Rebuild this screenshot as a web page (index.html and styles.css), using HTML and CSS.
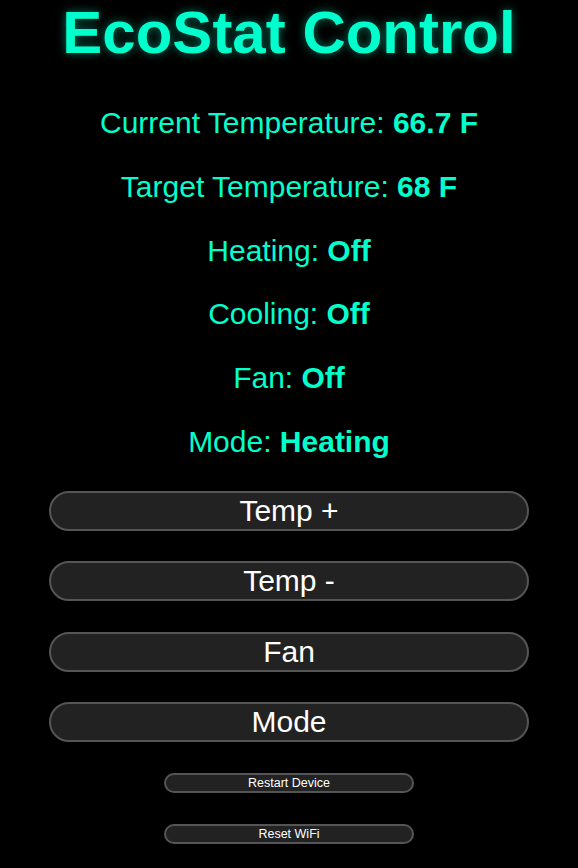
FILE: index.html
```html
<!DOCTYPE html>
<html lang="en">
<head>
<meta charset="utf-8">
<title>EcoStat Control</title>
<link rel="stylesheet" href="styles.css">
</head>
<body>
<main class="app">
  <h1 class="title">EcoStat Control</h1>
  <div class="stats">
    <p class="stat">Current Temperature: <b>66.7 F</b></p>
    <p class="stat">Target Temperature: <b>68 F</b></p>
    <p class="stat">Heating: <b>Off</b></p>
    <p class="stat">Cooling: <b>Off</b></p>
    <p class="stat">Fan: <b>Off</b></p>
    <p class="stat">Mode: <b>Heating</b></p>
  </div>
  <div class="controls">
    <button class="btn">Temp +</button>
    <button class="btn">Temp -</button>
    <button class="btn">Fan</button>
    <button class="btn">Mode</button>
  </div>
  <div class="system">
    <button class="btn btn-small">Restart Device</button>
    <button class="btn btn-small">Reset WiFi</button>
  </div>
</main>
</body>
</html>
```
FILE: styles.css
```css
html, body {
  margin: 0;
  background: #000;
}
body {
  font-family: "Liberation Sans", Arial, sans-serif;
}
.app {
  display: flex;
  flex-direction: column;
  align-items: center;
  text-align: center;
}
.title {
  margin: 0;
  font-size: 60px;
  line-height: 65px;
  font-weight: bold;
  color: #00ffcc;
  text-shadow: 0 0 10px rgba(0, 255, 204, 0.45);
}
.stats {
  margin-top: 41px;
  display: flex;
  flex-direction: column;
  gap: 29.8px;
}
.stat {
  margin: 0;
  font-size: 30px;
  line-height: 34px;
  color: #00ffcc;
}
.stat b {
  font-weight: bold;
}
.controls {
  margin-top: 32px;
  width: 480px;
  display: flex;
  flex-direction: column;
  gap: 30.5px;
}
.btn {
  box-sizing: border-box;
  height: 40px;
  padding: 0;
  border: 2px solid #555;
  border-radius: 20px;
  background: #222;
  color: #fff;
  font-family: "Liberation Sans", Arial, sans-serif;
  font-size: 30px;
  line-height: 1;
}
.system {
  margin-top: 31px;
  width: 250px;
  display: flex;
  flex-direction: column;
  gap: 31px;
}
.btn-small {
  height: 20px;
  border-radius: 10px;
  font-size: 12.5px;
}
```
